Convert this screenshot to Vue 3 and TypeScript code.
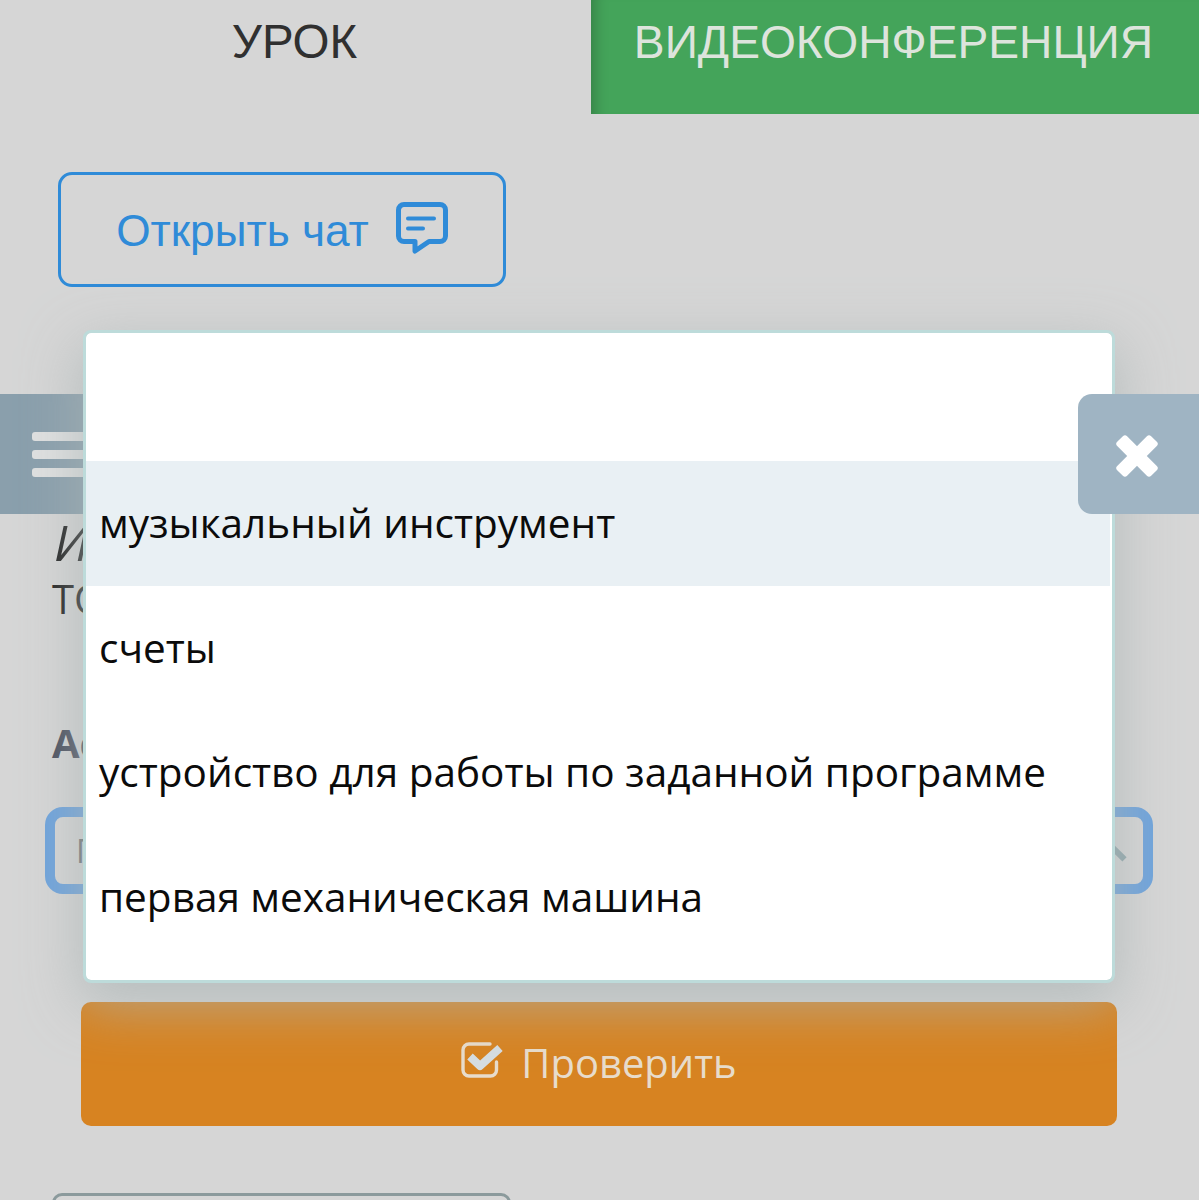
<script setup lang="ts">
const options: string[] = [
  '',
  'музыкальный инструмент',
  'счеты',
  'устройство для работы по заданной программе',
  'первая механическая машина',
]
const activeIndex = 1
</script>

<template>
  <div class="page">
    <nav class="tabs">
      <div class="tab">УРОК</div>
      <div class="tab tab-active">ВИДЕОКОНФЕРЕНЦИЯ</div>
    </nav>

    <button class="chat" type="button">
      <span>Открыть чат</span>
      <svg class="chat-icon" viewBox="0 0 52 52" width="52" height="52" aria-hidden="true">
        <path d="M8 2.5H44a5.5 5.5 0 0 1 5.5 5.5V34a5.5 5.5 0 0 1-5.5 5.5H33L19 49V39.5H8A5.5 5.5 0 0 1 2.5 34V8A5.5 5.5 0 0 1 8 2.5Z" fill="none" stroke="#2f8bd8" stroke-width="5" stroke-linejoin="round" />
        <path d="M12 16.5H38M12 26.5H27" fill="none" stroke="#2f8bd8" stroke-width="4" stroke-linecap="round" />
      </svg>
    </button>

    <section class="lesson">
      <h1 class="lesson-title">И</h1>
      <p class="lesson-sub">ТО</p>
      <label class="field-label">Ас</label>
      <div class="select">
        <span class="select-text">П</span>
        <span class="select-arrow"></span>
      </div>
      <button class="check" type="button">
        <svg class="check-icon" viewBox="0 0 44 40" width="44" height="40" aria-hidden="true">
          <path d="M35.5 20V28a6 6 0 0 1-6 6H8a6 6 0 0 1-6-6V8a6 6 0 0 1 6-6H29" fill="none" stroke="#e8dccb" stroke-width="3.4" stroke-linecap="round" />
          <path d="M9 14.5L19 24L39 6" fill="none" stroke="#d6dde2" stroke-width="8" stroke-linejoin="round" />
        </svg>
        <span class="check-label">Проверить</span>
      </button>
      <div class="next"></div>
    </section>

    <div class="side-tab menu-tab">
      <span class="bar"></span>
      <span class="bar"></span>
      <span class="bar"></span>
    </div>

    <div class="side-tab close-tab">
      <svg viewBox="0 0 46 46" width="46" height="46" aria-hidden="true">
        <rect x="16" y="-1" width="14" height="48" rx="3" fill="#ffffff" transform="rotate(45 23 23)" />
        <rect x="16" y="-1" width="14" height="48" rx="3" fill="#ffffff" transform="rotate(-45 23 23)" />
      </svg>
    </div>

    <ul class="dropdown">
      <li
        v-for="(option, index) in options"
        :key="index"
        class="option"
        :class="{ 'option-active': index === activeIndex }"
      >{{ option }}</li>
    </ul>
  </div>
</template>

<style>
html, body { margin: 0; background: #d6d6d6; }
</style>

<style scoped>
.page {
  position: relative;
  width: 1199px;
  height: 1200px;
  overflow: hidden;
  background: #d6d6d6;
  font-family: "Open Sans", sans-serif;
}
.tabs {
  display: grid;
  grid-template-columns: 591px 608px;
  height: 114px;
  font-family: "Liberation Sans", sans-serif;
  font-size: 47.5px;
}
.tab {
  padding-right: 2px;
  text-align: center;
  line-height: 84px;
  color: #303030;
}
.tab-active {
  padding-right: 3px;
  font-size: 46.2px;
  color: #dde4dc;
  background: #44a45a;
  box-shadow: inset 16px 0 14px -12px rgba(0, 0, 0, .22);
}
.chat {
  display: flex;
  align-items: center;
  justify-content: center;
  gap: 27px;
  box-sizing: border-box;
  width: 448px;
  height: 115px;
  margin: 58px 0 0 58px;
  padding: 2px 0 0 0;
  border: 3px solid #2f8bd8;
  border-radius: 14px;
  background: transparent;
  color: #2f8bd8;
  font-family: "Liberation Sans", sans-serif;
  font-size: 44.2px;
}
.chat-icon { margin-top: -5px; }
.lesson {
  display: flex;
  flex-direction: column;
  align-items: flex-start;
  padding: 225px 0 0 52px;
}
.lesson-title {
  height: 62px;
  margin: 0 0 0 2px;
  font-size: 50px;
  font-style: italic;
  font-weight: 400;
  line-height: 60px;
  color: #222;
}
.lesson-sub {
  height: 50px;
  margin: 0;
  font-size: 40px;
  line-height: 50px;
  color: #222;
}
.field-label {
  height: 50px;
  margin-top: 94px;
  font-size: 40px;
  font-weight: 700;
  line-height: 50px;
  color: #4a4f5e;
}
.select {
  display: flex;
  align-items: center;
  justify-content: space-between;
  box-sizing: border-box;
  width: 1108px;
  height: 87px;
  margin: 39px 0 0 -7px;
  padding: 0 15px 0 21px;
  border: 10px solid #6ea3dc;
  border-radius: 18px;
  color: #6e7173;
  font-size: 32px;
}
.select-arrow {
  width: 24px;
  height: 6px;
  background: #8fa6ab;
  transform: rotate(45deg);
}
.check {
  display: flex;
  align-items: center;
  justify-content: center;
  gap: 16px;
  box-sizing: border-box;
  width: 1036px;
  height: 124px;
  margin: 108px 0 0 29px;
  padding: 0;
  border: 0;
  border-radius: 10px;
  background: #d78321;
  color: #e8dccb;
  font-family: "Open Sans", sans-serif;
  font-size: 40px;
}
.check-icon { margin-top: -4px; }
.check-label { margin-top: -3px; }
.next {
  box-sizing: border-box;
  width: 459px;
  height: 60px;
  margin-top: 67px;
  border: 3px solid #8b9a9c;
  border-radius: 10px;
}
.side-tab {
  position: absolute;
  top: 394px;
  height: 120px;
  box-sizing: border-box;
}
.menu-tab {
  left: 0;
  width: 120px;
  padding: 38px 0 0 32px;
  display: flex;
  flex-direction: column;
  gap: 9px;
  background: #8a9fac;
}
.bar {
  display: block;
  height: 9px;
  width: 80px;
  border-radius: 3px;
  background: #dfe0e0;
}
.close-tab {
  right: 0;
  width: 121px;
  padding: 39px 0 0 36px;
  border-radius: 14px 0 0 14px;
  background: #9fb4c3;
  z-index: 2;
}
.close-tab svg { display: block; overflow: visible; }
.dropdown {
  position: absolute;
  top: 330px;
  left: 83px;
  box-sizing: border-box;
  width: 1032px;
  height: 653px;
  margin: 0;
  padding: 3.5px 2px 0 0;
  list-style: none;
  background: #fff;
  background-clip: padding-box;
  border: 3px solid #bddbda;
  border-radius: 8px;
  box-shadow: 0 18px 55px 4px rgba(170, 180, 180, .72);
  z-index: 1;
}
.option {
  box-sizing: border-box;
  height: 124.5px;
  padding: 0 13px;
  font-size: 40.5px;
  line-height: 124px;
  color: #0b0b0b;
  white-space: nowrap;
}
.option-active { background: #e9f0f4; }
</style>
